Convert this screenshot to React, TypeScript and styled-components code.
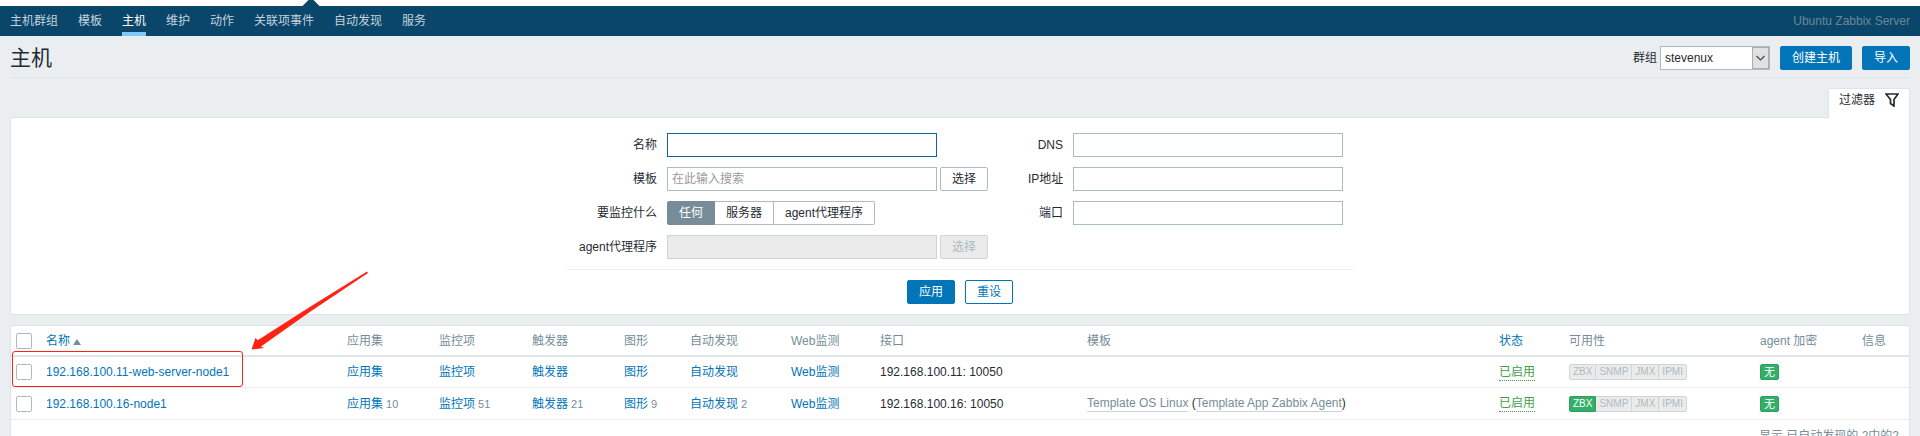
import React from 'react';
import styled, { createGlobalStyle, css } from 'styled-components';

const color = {
  nav: '#0a466a',
  page: '#ebeef0',
  line: '#dfe4e7',
  rowLine: '#ebeef0',
  text: '#1f2c33',
  grey: '#768d99',
  link: '#0275b8',
  field: '#acbbc2',
  fieldOff: '#ccd5d9',
  green: '#34af67',
  greenText: '#429e47',
  mark: '#ff2314',
};

const GlobalStyle = createGlobalStyle`
  *, *::before, *::after { box-sizing: border-box; }
  html { height: 100%; overflow: hidden; }
  body {
    margin: 0;
    min-height: 100%;
    background: ${color.page};
    color: ${color.text};
    font-family: "Liberation Sans", "Noto Sans CJK SC", sans-serif;
    font-size: 12px;
    line-height: 16px;
  }
  button, input, select { font: inherit; color: inherit; margin: 0; }
`;

const TopStrip = styled.div`
  display: flex;
  height: 6px;
  padding-left: 302px;
  background: #fff;
`;

const Caret = styled.svg`
  display: block;
  width: 18px;
  height: 6px;
`;

const NavBar = styled.nav`
  display: flex;
  justify-content: space-between;
  align-items: stretch;
  height: 30px;
  padding: 0 10px;
  background: ${color.nav};
`;

const NavList = styled.ul`
  display: flex;
  gap: 20px;
  margin: 0;
  padding: 0;
  list-style: none;
`;

const NavLink = styled.a<{ $active?: boolean }>`
  display: block;
  height: 30px;
  padding-top: 7px;
  color: ${(p) => (p.$active ? '#fff' : '#c3d2dc')};
  border-bottom: 4px solid ${(p) => (p.$active ? '#80c8f6' : 'transparent')};
  text-decoration: none;
`;

const ServerName = styled.span`
  align-self: center;
  color: #6a8796;
`;

const Content = styled.main`
  padding: 0 10px;
`;

const Header = styled.header`
  display: flex;
  justify-content: space-between;
  align-items: flex-start;
  height: 42px;
  padding-top: 10px;
  border-bottom: 1px solid ${color.line};
`;

const Title = styled.h1`
  margin: 0;
  font-size: 21px;
  font-weight: 400;
  line-height: 24px;
`;

const Controls = styled.div`
  display: flex;
  align-items: center;
  gap: 10px;
`;

const GroupPicker = styled.label`
  display: flex;
  align-items: center;
  gap: 3px;
`;

const SelectBox = styled.span`
  position: relative;
  display: block;
  width: 110px;
`;

const Select = styled.select`
  appearance: none;
  display: block;
  width: 100%;
  height: 24px;
  padding: 0 20px 0 4px;
  border: 1px solid ${color.field};
  border-radius: 0;
  background: #fff;
`;

const SelectArrow = styled.svg`
  position: absolute;
  top: 1px;
  right: 1px;
  width: 17px;
  height: 22px;
  pointer-events: none;
`;

type Kind = 'primary' | 'outline' | 'plain';

const Button = styled.button<{ $kind: Kind }>`
  height: 24px;
  padding: 0 11px;
  border: 1px solid ${color.link};
  border-radius: 2px;
  line-height: 22px;
  ${(p) => p.$kind === 'primary' && css`background: ${color.link}; color: #fff;`}
  ${(p) => p.$kind === 'outline' && css`background: #fff; color: ${color.link};`}
  ${(p) => p.$kind === 'plain' && css`background: #fff; border-color: ${color.field};`}
  &:disabled {
    background: #ebebeb;
    border-color: ${color.fieldOff};
    color: ${color.field};
  }
`;

const TabRow = styled.div`
  display: flex;
  justify-content: flex-end;
  padding-top: 10px;
`;

const FilterTab = styled.button`
  display: flex;
  align-items: center;
  gap: 10px;
  height: 30px;
  margin-bottom: -1px;
  padding: 0 10px 8px;
  border: 1px solid ${color.line};
  border-bottom: 0;
  border-radius: 2px 2px 0 0;
  background: #fff;
  z-index: 1;
`;

const Panel = styled.section`
  border: 1px solid ${color.line};
  background: #fff;
`;

const FilterForm = styled.form`
  display: flex;
  flex-direction: column;
  align-items: center;
  padding: 15px 0 10px;
`;

const FieldColumns = styled.div`
  display: flex;
  gap: 40px;
  padding: 0 10px 10px;
  border-bottom: 1px solid ${color.rowLine};
`;

const FieldGrid = styled.div<{ $label: number }>`
  display: grid;
  grid-template-columns: ${(p) => p.$label}px auto;
  grid-auto-rows: 24px;
  align-items: center;
  gap: 10px;
`;

const FieldLabel = styled.label`
  text-align: right;
  white-space: nowrap;
`;

const FieldSet = styled.div`
  display: flex;
  gap: 3px;
`;

const TextInput = styled.input<{ $focus?: boolean }>`
  width: 270px;
  height: 24px;
  padding: 0 4px;
  border: 1px solid ${(p) => (p.$focus ? '#0a6799' : color.field)};
  border-radius: 0;
  background: #fff;
  outline: 0;
  &::placeholder { color: #9a9a9a; opacity: 1; }
  &:disabled { background: #ebebeb; border-color: ${color.fieldOff}; }
`;

const Segments = styled.div`
  display: flex;
`;

const Segment = styled.label`
  position: relative;
  height: 24px;
  padding: 0 11px;
  border: 1px solid ${color.field};
  border-left-width: 0;
  line-height: 22px;
  &:first-child { border-left-width: 1px; border-radius: 2px 0 0 2px; }
  &:last-child { border-radius: 0 2px 2px 0; }
  &:has(input:checked) {
    background: ${color.grey};
    border-color: ${color.grey};
    color: #fff;
  }
  input {
    position: absolute;
    inset: 0;
    opacity: 0;
  }
`;

const FormButtons = styled.div`
  display: flex;
  gap: 10px;
  padding-top: 10px;
`;

const TablePanel = styled(Panel)`
  position: relative;
  margin-top: 10px;
`;

const HostTable = styled.table`
  width: 100%;
  table-layout: fixed;
  border-collapse: separate;
  border-spacing: 0;
  th, td {
    height: 31px;
    padding: 0 5px;
    text-align: left;
    font-weight: 400;
    white-space: nowrap;
    border-bottom: 1px solid ${color.rowLine};
  }
  th {
    color: ${color.grey};
    border-bottom: 2px solid ${color.line};
  }
  tr:last-child td { height: 32px; }
`;

const Check = styled.input`
  appearance: none;
  display: block;
  width: 16px;
  height: 16px;
  border: 1px solid ${color.field};
  border-radius: 2px;
  background: #fff;
`;

const Link = styled.a`
  color: ${color.link};
  text-decoration: none;
`;

const SortMark = styled.svg`
  width: 8px;
  height: 6px;
  margin-left: 3px;
`;

const Count = styled.span`
  margin-left: 3px;
  color: ${color.grey};
  font-size: 11px;
`;

const StatusLink = styled.a`
  display: inline-block;
  color: ${color.greenText};
  line-height: 15px;
  border-bottom: 1px dotted ${color.greenText};
  text-decoration: none;
`;

const TemplateLink = styled.a`
  display: inline-block;
  color: ${color.grey};
  line-height: 15px;
  border-bottom: 1px solid ${color.fieldOff};
  text-decoration: none;
`;

const Badges = styled.div`
  display: flex;
`;

const Badge = styled.span<{ $on?: boolean; $large?: boolean }>`
  height: 16px;
  padding: 0 3px;
  border: 1px solid ${(p) => (p.$on ? '#2f9f5e' : color.fieldOff)};
  background: ${(p) => (p.$on ? color.green : '#ebebeb')};
  color: ${(p) => (p.$on ? '#fff' : color.field)};
  font-size: ${(p) => (p.$large ? 11 : 10)}px;
  line-height: 14px;
  & + & { border-left-width: 0; }
  &:first-child { border-top-left-radius: 2px; border-bottom-left-radius: 2px; }
  &:last-child { border-top-right-radius: 2px; border-bottom-right-radius: 2px; }
`;

const Footer = styled.div`
  padding: 8px 10px;
  color: ${color.grey};
  text-align: right;
`;

const HighlightBox = styled.div`
  position: absolute;
  left: 1px;
  top: 25px;
  width: 231px;
  height: 36px;
  border: 1px solid ${color.mark};
  border-radius: 3px;
  pointer-events: none;
`;

const HighlightArrow = styled.svg`
  position: absolute;
  left: 240px;
  top: -55px;
  width: 118px;
  height: 80px;
  pointer-events: none;
`;

const navItems = ['主机群组', '模板', '主机', '维护', '动作', '关联项事件', '自动发现', '服务'];
const columnWidths = [30, 301, 92, 93, 92, 66, 101, 89, 207, 412, 70, 191, 102, 52];
const linkColumns = ['应用集', '监控项', '触发器', '图形', '自动发现', 'Web监测'];
const protocols = ['ZBX', 'SNMP', 'JMX', 'IPMI'];

type Host = {
  name: string;
  address: string;
  counts: (number | null)[];
  template?: [string, string];
  zbx: boolean;
};

const hosts: Host[] = [
  {
    name: '192.168.100.11-web-server-node1',
    address: '192.168.100.11: 10050',
    counts: [null, null, null, null, null, null],
    zbx: false,
  },
  {
    name: '192.168.100.16-node1',
    address: '192.168.100.16: 10050',
    counts: [10, 51, 21, 9, 2, null],
    template: ['Template OS Linux', 'Template App Zabbix Agent'],
    zbx: true,
  },
];

function HostRow({ host }: { host: Host }) {
  return (
    <tr>
      <td><Check type="checkbox" aria-label={host.name} /></td>
      <td><Link href="#">{host.name}</Link></td>
      {linkColumns.map((label, i) => (
        <td key={label}>
          <Link href="#">{label}</Link>
          {host.counts[i] !== null && <Count>{host.counts[i]}</Count>}
        </td>
      ))}
      <td>{host.address}</td>
      <td>
        {host.template && (
          <>
            <TemplateLink href="#">{host.template[0]}</TemplateLink>
            {' ('}
            <TemplateLink href="#">{host.template[1]}</TemplateLink>
            {')'}
          </>
        )}
      </td>
      <td><StatusLink href="#">已启用</StatusLink></td>
      <td>
        <Badges>
          {protocols.map((name) => (
            <Badge key={name} $on={name === 'ZBX' && host.zbx}>{name}</Badge>
          ))}
        </Badges>
      </td>
      <td><Badges><Badge $on $large>无</Badge></Badges></td>
      <td />
    </tr>
  );
}

export default function App() {
  return (
    <>
      <GlobalStyle />
      <TopStrip>
        <Caret viewBox="0 0 18 6" aria-hidden="true">
          <path d="M0.500 6L6.500 0H11.500L17.500 6Z" fill={color.nav} />
        </Caret>
      </TopStrip>
      <NavBar>
        <NavList>
          {navItems.map((item) => (
            <li key={item}><NavLink href="#" $active={item === '主机'}>{item}</NavLink></li>
          ))}
        </NavList>
        <ServerName>Ubuntu Zabbix Server</ServerName>
      </NavBar>
      <Content>
        <Header>
          <Title>主机</Title>
          <Controls>
            <GroupPicker>
              群组
              <SelectBox>
                <Select defaultValue="stevenux">
                  <option>stevenux</option>
                </Select>
                <SelectArrow viewBox="0 0 17 22" aria-hidden="true">
                  <rect x="0.5" y="0.5" width="16" height="21" fill="#e1e1e1" stroke="#adadad" />
                  <path d="M4.500 9L8.500 13L12.500 9" fill="none" stroke="#444" strokeWidth="1.200" />
                </SelectArrow>
              </SelectBox>
            </GroupPicker>
            <Button type="button" $kind="primary">创建主机</Button>
            <Button type="button" $kind="primary">导入</Button>
          </Controls>
        </Header>
        <TabRow>
          <FilterTab type="button">
            过滤器
            <svg width="14" height="14" viewBox="0 0 14 14" aria-hidden="true">
              <path d="M1 1H13L9 6.500V13L5.500 10.500V6.500Z" fill="none" stroke="#1f2c33" strokeWidth="1.700" />
            </svg>
          </FilterTab>
        </TabRow>
        <Panel>
          <FilterForm onSubmit={(e) => e.preventDefault()}>
            <FieldColumns>
              <FieldGrid $label={80}>
                <FieldLabel htmlFor="name">名称</FieldLabel>
                <TextInput id="name" $focus />
                <FieldLabel htmlFor="template">模板</FieldLabel>
                <FieldSet>
                  <TextInput id="template" placeholder="在此输入搜索" />
                  <Button type="button" $kind="plain">选择</Button>
                </FieldSet>
                <FieldLabel as="span" id="monitored">要监控什么</FieldLabel>
                <Segments role="radiogroup" aria-labelledby="monitored">
                  <Segment><input type="radio" name="by" defaultChecked />任何</Segment>
                  <Segment><input type="radio" name="by" />服务器</Segment>
                  <Segment><input type="radio" name="by" />agent代理程序</Segment>
                </Segments>
                <FieldLabel htmlFor="proxy">agent代理程序</FieldLabel>
                <FieldSet>
                  <TextInput id="proxy" disabled />
                  <Button type="button" $kind="plain" disabled>选择</Button>
                </FieldSet>
              </FieldGrid>
              <FieldGrid $label={35}>
                <FieldLabel htmlFor="dns">DNS</FieldLabel>
                <TextInput id="dns" />
                <FieldLabel htmlFor="ip">IP地址</FieldLabel>
                <TextInput id="ip" />
                <FieldLabel htmlFor="port">端口</FieldLabel>
                <TextInput id="port" />
              </FieldGrid>
            </FieldColumns>
            <FormButtons>
              <Button type="submit" $kind="primary">应用</Button>
              <Button type="reset" $kind="outline">重设</Button>
            </FormButtons>
          </FilterForm>
        </Panel>
        <TablePanel>
          <HostTable>
            <colgroup>
              {columnWidths.map((w, i) => <col key={i} width={w} />)}
            </colgroup>
            <thead>
              <tr>
                <th><Check type="checkbox" aria-label="主机" /></th>
                <th>
                  <Link href="#">名称</Link>
                  <SortMark viewBox="0 0 8 6" aria-hidden="true">
                    <path d="M4 0L8 6H0Z" fill={color.grey} />
                  </SortMark>
                </th>
                {linkColumns.map((label) => <th key={label}>{label}</th>)}
                <th>接口</th>
                <th>模板</th>
                <th><Link href="#">状态</Link></th>
                <th>可用性</th>
                <th>agent 加密</th>
                <th>信息</th>
              </tr>
            </thead>
            <tbody>
              {hosts.map((host) => <HostRow key={host.name} host={host} />)}
            </tbody>
          </HostTable>
          <Footer>显示 已自动发现的 2中的2</Footer>
          <HighlightBox />
          <HighlightArrow viewBox="0 0 118 80" aria-hidden="true">
            <path d="M116 0.500L117 2L58 41.500L10 75.500L13 77L0.500 78.500L4.500 67L6.700 69.200L58 36.500Z" fill={color.mark} />
          </HighlightArrow>
        </TablePanel>
      </Content>
    </>
  );
}
